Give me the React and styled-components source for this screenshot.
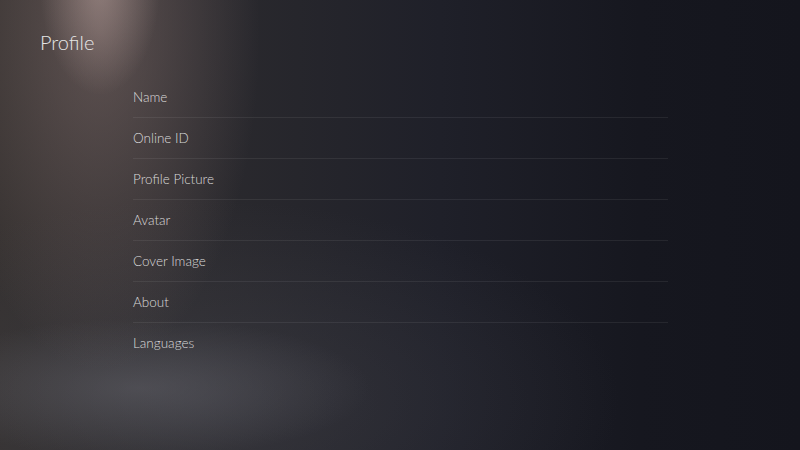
import React from "react";
import styled, { createGlobalStyle } from "styled-components";

const Global = createGlobalStyle`
  html, body { margin: 0; padding: 0; height: 100%; background: #16171f; }
  #root { height: 100%; }
  * { box-sizing: border-box; }
`;

const Screen = styled.div`
  width: 800px;
  height: 450px;
  overflow: hidden;
  font-family: Lato, "Noto Sans", sans-serif;
  color: #dcdcdc;
  background:
    radial-gradient(ellipse 60px 110px at 100px -15px, rgba(195, 170, 165, 0.5), rgba(195, 170, 165, 0) 100%),
    radial-gradient(ellipse 160px 340px at 100px 30px, rgba(140, 118, 115, 0.5), rgba(140, 118, 115, 0) 100%),
    radial-gradient(ellipse 230px 70px at 140px 388px, rgba(110, 110, 118, 0.42), rgba(110, 110, 118, 0) 100%),
    radial-gradient(ellipse 420px 200px at 200px 400px, rgba(70, 70, 78, 0.45), rgba(70, 70, 78, 0) 100%),
    linear-gradient(90deg, #34302f 0%, #2b2a2e 25%, #1f2029 55%, #16171f 80%, #14151d 100%);
  padding: 30px 0 0 40px;
`;

const Title = styled.h1`
  margin: 0;
  font-size: 20px;
  line-height: 24px;
  font-weight: 300;
  color: #e6e6e6;
`;

const Menu = styled.ul`
  list-style: none;
  margin: 23px 0 0 93px;
  padding: 0;
  width: 535px;
  display: flex;
  flex-direction: column;
`;

const Item = styled.li`
  height: ${(p) => (p.$last ? "40px" : "41px")};
  display: flex;
  align-items: center;
  font-size: 13.5px;
  font-weight: 300;
  color: #dadada;
  border-bottom: ${(p) => (p.$last ? "none" : "1px solid rgba(255, 255, 255, 0.07)")};
`;

const items = ["Name", "Online ID", "Profile Picture", "Avatar", "Cover Image", "About", "Languages"];

export default function App() {
  return (
    <>
      <Global />
      <Screen>
        <Title>Profile</Title>
        <Menu>
          {items.map((t, i) => (
            <Item key={t} $last={i === items.length - 1}>{t}</Item>
          ))}
        </Menu>
      </Screen>
    </>
  );
}
